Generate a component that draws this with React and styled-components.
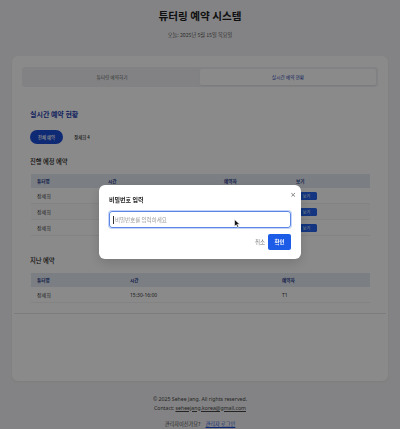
import React from "react";
import styled, { createGlobalStyle } from "styled-components";

const GlobalStyle = createGlobalStyle`
  html, body {
    margin: 0;
    padding: 0;
    background: #f3f3f5;
    font-family: "Noto Sans", "Noto Sans CJK KR", sans-serif;
  }
  * { box-sizing: border-box; }
`;

const Page = styled.div`
  width: 400px;
  min-height: 429px;
  display: flex;
  flex-direction: column;
  align-items: center;
  padding-top: 8px;
`;

const Title = styled.h1`
  margin: 0;
  font-family: "Noto Sans CJK KR", sans-serif;
  font-size: 10.6px;
  font-weight: 700;
  line-height: 16px;
  color: #1c1c1e;
`;

const Today = styled.div`
  margin-top: 7px;
  font-family: "Noto Sans CJK KR", sans-serif;
  font-size: 5.2px;
  line-height: 8px;
  color: #555;
`;

const Card = styled.div`
  margin-top: 17px;
  width: 376px;
  background: #fff;
  border-radius: 6px;
  padding: 11px 10px 67px;
  box-shadow: 0 1px 3px rgba(0, 0, 0, 0.05);
`;

const Tabs = styled.div`
  display: flex;
  background: #f0f1f4;
  border-radius: 3px;
  padding: 2px;
  height: 20px;
`;

const Tab = styled.div`
  flex: 1;
  display: flex;
  align-items: center;
  justify-content: center;
  border-radius: 2px;
  font-family: "Noto Sans CJK KR", sans-serif;
  font-size: 4.7px;
  color: ${(p) => (p.$active ? "#1e40af" : "#666")};
  background: ${(p) => (p.$active ? "#fff" : "transparent")};
  box-shadow: ${(p) => (p.$active ? "0 1px 2px rgba(0,0,0,0.06)" : "none")};
`;

const Content = styled.div`
  padding: 21px 8px 0;
`;

const SectionTitle = styled.h2`
  margin: 0;
  font-family: "Noto Sans CJK KR", sans-serif;
  font-size: 7px;
  font-weight: 700;
  line-height: 12px;
  color: #1e40af;
`;

const Filters = styled.div`
  display: flex;
  align-items: center;
  gap: 3px;
  margin-top: 10px;
`;

const Pill = styled.div`
  height: 14px;
  padding: 0 8px;
  border-radius: 7px;
  display: flex;
  align-items: center;
  font-family: "Noto Sans CJK KR", sans-serif;
  font-size: 4.4px;
  font-weight: 500;
  color: ${(p) => (p.$active ? "#fff" : "#333")};
  background: ${(p) => (p.$active ? "#1d4ed8" : "transparent")};
`;

const SubTitle = styled.h3`
  margin: 12px 0 0;
  font-family: "Noto Sans CJK KR", sans-serif;
  font-size: 6.3px;
  font-weight: 500;
  line-height: 12px;
  color: #222;
`;

const Table = styled.div`
  margin: 6px 0 0 1px;
  width: 339px;
`;

const Row = styled.div`
  display: grid;
  grid-template-columns: ${(p) => p.$cols};
  align-items: center;
  height: ${(p) => (p.$head ? "14px" : "16px")};
  padding-left: 6px;
  background: ${(p) => (p.$head ? "#e4eaf4" : p.$hl ? "#fcfcfe" : "transparent")};
  border-bottom: ${(p) => (p.$head ? "none" : "1px solid #f2f2f4")};
`;

const Cell = styled.div`
  font-family: "Noto Sans", "Noto Sans CJK KR", sans-serif;
  font-size: ${(p) => (p.$head ? "4.6px" : "5px")};
  font-weight: ${(p) => (p.$head ? 600 : 400)};
  color: ${(p) => (p.$head ? "#1e3a8a" : "#333")};
`;

const ViewButton = styled.div`
  width: 21px;
  height: 8px;
  border-radius: 1.5px;
  background: #2563eb;
  color: #fff;
  font-family: "Noto Sans CJK KR", sans-serif;
  font-size: 4px;
  display: flex;
  align-items: center;
  justify-content: center;
`;

const PastTitle = styled(SubTitle)`
  margin-top: 19px;
`;

const Divider = styled.hr`
  margin: 10px -8px 0;
  border: none;
  border-top: 1px solid #e6e6ea;
`;

const Footer = styled.footer`
  margin-top: 14px;
  display: flex;
  flex-direction: column;
  align-items: center;
  font-family: "Noto Sans", "Noto Sans CJK KR", sans-serif;
  font-size: 5.2px;
  line-height: 8.5px;
  color: #444;
`;

const Mail = styled.span`
  text-decoration: underline;
`;

const AdminLine = styled.div`
  margin-top: 8px;
  font-family: "Noto Sans CJK KR", sans-serif;
  display: flex;
  gap: 5px;
`;

const AdminLink = styled.span`
  color: #1d4ed8;
  text-decoration: underline;
`;

const Overlay = styled.div`
  position: fixed;
  inset: 0;
  background: rgba(0, 0, 0, 0.46);
  display: flex;
  justify-content: center;
  align-items: flex-start;
  padding-top: 185px;
`;

const Modal = styled.div`
  position: relative;
  width: 202px;
  height: 74px;
  background: #fff;
  border-radius: 6px;
  padding: 9px 10px;
  box-shadow: 0 4px 12px rgba(0, 0, 0, 0.15);
`;

const ModalTitle = styled.div`
  font-family: "Noto Sans CJK KR", sans-serif;
  font-size: 6px;
  font-weight: 700;
  line-height: 12px;
  color: #222;
`;

const Close = styled.div`
  position: absolute;
  top: 6px;
  right: 5px;
  font-family: "DejaVu Sans", sans-serif;
  font-size: 7px;
  color: #666;
`;

const Input = styled.div`
  margin-top: 5px;
  height: 17px;
  border: 1px solid #5b86e5;
  box-shadow: 0 0 0 1px rgba(91, 134, 229, 0.35);
  border-radius: 3px;
  display: flex;
  align-items: center;
  padding-left: 3px;
  font-family: "Noto Sans CJK KR", sans-serif;
  font-size: 5.5px;
  color: #9a9a9e;
`;

const Caret = styled.span`
  width: 1px;
  height: 8px;
  background: #333;
  margin-right: 1px;
`;

const Actions = styled.div`
  margin-top: 6px;
  display: flex;
  justify-content: flex-end;
  align-items: center;
  gap: 3px;
`;

const CancelBtn = styled.div`
  font-family: "Noto Sans CJK KR", sans-serif;
  font-size: 5.5px;
  color: #777;
`;

const ConfirmBtn = styled.div`
  width: 23px;
  height: 16px;
  border-radius: 2px;
  background: #1d5ce6;
  color: #fff;
  display: flex;
  align-items: center;
  justify-content: center;
  font-family: "Noto Sans CJK KR", sans-serif;
  font-size: 5.5px;
  font-weight: 700;
`;

const Pointer = styled.svg`
  position: absolute;
  left: 135px;
  top: 34px;
`;

const upcoming = ["장세희", "장세희", "장세희"];
const upCols = "71px 116px 72px 1fr";
const pastCols = "93px 152px 1fr";

export default function App() {
  return (
    <>
      <GlobalStyle />
      <Page>
        <Title>튜터링 예약 시스템</Title>
        <Today>오늘: 2025년 5월 15일 목요일</Today>
        <Card>
          <Tabs>
            <Tab>튜터링 예약하기</Tab>
            <Tab $active>실시간 예약 현황</Tab>
          </Tabs>
          <Content>
            <SectionTitle>실시간 예약 현황</SectionTitle>
            <Filters>
              <Pill $active>전체 예약</Pill>
              <Pill>장세희 4</Pill>
            </Filters>
            <SubTitle>진행 예정 예약</SubTitle>
            <Table>
              <Row $head $cols={upCols}>
                <Cell $head>튜터명</Cell>
                <Cell $head>시간</Cell>
                <Cell $head>예약자</Cell>
                <Cell $head>보기</Cell>
              </Row>
              {upcoming.map((name, i) => (
                <Row key={i} $cols={upCols} $hl={i === 1}>
                  <Cell>{name}</Cell>
                  <Cell />
                  <Cell />
                  <ViewButton>보기</ViewButton>
                </Row>
              ))}
            </Table>
            <PastTitle>지난 예약</PastTitle>
            <Table>
              <Row $head $cols={pastCols}>
                <Cell $head>튜터명</Cell>
                <Cell $head>시간</Cell>
                <Cell $head>예약자</Cell>
              </Row>
              <Row $cols={pastCols}>
                <Cell>장세희</Cell>
                <Cell>15:30-16:00</Cell>
                <Cell>T1</Cell>
              </Row>
            </Table>
          </Content>
          <Divider />
        </Card>
        <Footer>
          <div>© 2025 Sehee Jang. All rights reserved.</div>
          <div>
            Contact: <Mail>seheejang.korea@gmail.com</Mail>
          </div>
          <AdminLine>
            <span>관리자이신가요?</span>
            <AdminLink>관리자 로그인</AdminLink>
          </AdminLine>
        </Footer>
      </Page>
      <Overlay>
        <Modal>
          <ModalTitle>비밀번호 입력</ModalTitle>
          <Close>×</Close>
          <Input>
            <Caret />
            비밀번호를 입력하세요
          </Input>
          <Actions>
            <CancelBtn>취소</CancelBtn>
            <ConfirmBtn>확인</ConfirmBtn>
          </Actions>
          <Pointer width="6" height="9" viewBox="0 0 12 18">
            <path d="M1 1 L1 15 L4.5 11.5 L7 17 L9.5 16 L7 10.5 L11.5 10.5 Z" fill="#111" stroke="#fff" strokeWidth="1.2" />
          </Pointer>
        </Modal>
      </Overlay>
    </>
  );
}
